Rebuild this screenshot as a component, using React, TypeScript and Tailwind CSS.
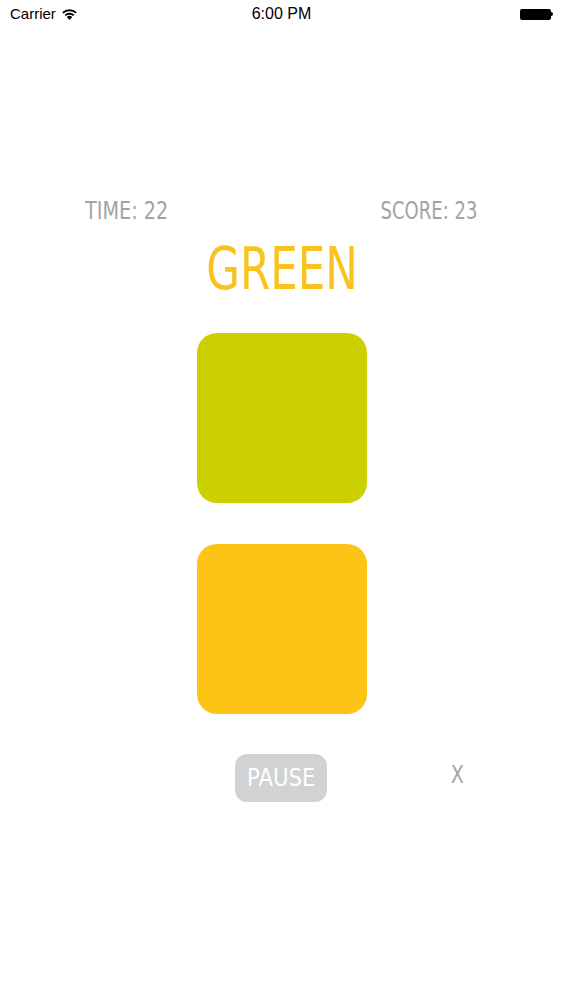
import React from "react";

const gameFont = {
	fontFamily: '"DejaVu Sans", sans-serif',
};

function StatusBar() {
	return (
		<div
			className="relative flex h-[28px] items-center px-[10px] text-[15px] text-black"
			style={{ fontFamily: '"Liberation Sans", Arial, sans-serif' }}
		>
			<div className="flex items-center gap-[5px]">
				<span>Carrier</span>
				<svg width="17" height="12" viewBox="0 0 17 12">
					<path d="M8.5 12 L5.8 8.9 A4 4 0 0 1 11.2 8.9 Z" fill="#000" />
					<path d="M3.6 6.7 A7 7 0 0 1 13.4 6.7 L12.1 8.1 A5.2 5.2 0 0 0 4.9 8.1 Z" fill="#000" />
					<path d="M1.2 4.2 A10.5 10.5 0 0 1 15.8 4.2 L14.5 5.6 A8.6 8.6 0 0 0 2.5 5.6 Z" fill="#000" />
				</svg>
			</div>
			<span className="absolute left-1/2 -translate-x-1/2 text-[16px] font-medium">6:00 PM</span>
			<div className="ml-auto flex items-center">
				<div className="h-[11px] w-[31px] rounded-[2px] bg-black" />
				<div className="h-[4px] w-[2px] rounded-r-sm bg-black" />
			</div>
		</div>
	);
}

export default function App() {
	return (
		<div className="h-[1000px] w-[563px] bg-white">
			<StatusBar />
			<div className="flex flex-col items-center" style={gameFont}>
				<div className="mt-[168px] flex w-full justify-between pl-[85px] pr-[86px] text-[25px] leading-[30px] text-[#a3a3a5]">
					<span className="inline-block origin-left scale-x-[0.77]">TIME: 22</span>
					<span className="inline-block origin-right scale-x-[0.72]">SCORE: 23</span>
				</div>
				<div className="mt-[8px] inline-block scale-x-[0.75] text-[58px] leading-[70px] text-[#f8c31e]">
					GREEN
				</div>
				<div className="mt-[29px] h-[170px] w-[170px] rounded-[20px] bg-[#ccd000]" />
				<div className="mt-[41px] h-[170px] w-[170px] rounded-[20px] bg-[#fcc515]" />
				<div className="mt-[40px] flex w-full items-center">
					<div className="ml-[235px] flex h-[48px] w-[92px] items-center justify-center rounded-[12px] bg-[#d0d2d4] text-[25px] text-white">
						<span className="inline-block scale-x-[0.85]">PAUSE</span>
					</div>
					<span className="ml-[122px] -mt-[6px] inline-block scale-x-[0.8] text-[24px] text-[#a3a3a5]">
						X
					</span>
				</div>
			</div>
		</div>
	);
}
